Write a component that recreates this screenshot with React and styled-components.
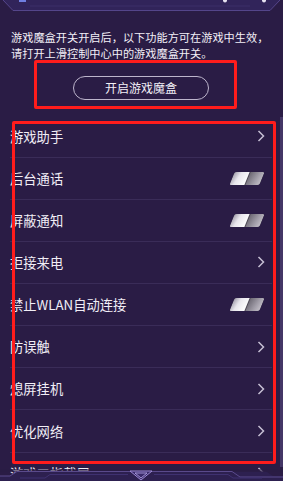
import React from "react";
import styled, { createGlobalStyle } from "styled-components";

const GlobalStyle = createGlobalStyle`
  html, body {
    margin: 0;
    padding: 0;
    background: #2a1c45;
  }
  * {
    box-sizing: border-box;
  }
`;

const rows = [
  { label: "游戏助手", type: "link" },
  { label: "后台通话", type: "toggle" },
  { label: "屏蔽通知", type: "toggle" },
  { label: "拒接来电", type: "link" },
  { label: "禁止WLAN自动连接", type: "toggle" },
  { label: "防误触", type: "link" },
  { label: "熄屏挂机", type: "link" },
  { label: "优化网络", type: "link" },
  { label: "游戏三指截屏", type: "link" },
];

const App = () => {
  return (
    <Screen>
      <GlobalStyle />
      <TopFrame>
        <svg width="283" height="12" viewBox="0 0 283 12">
          <path d="M3 0 L13 10.5 L270 10.5 L280 0 Z" fill="#31245a" />
          <path d="M3 0 L13 10.5 L270 10.5 L280 0" fill="none" stroke="#54458a" strokeWidth="1" />
          <path d="M30 6 L250 6" stroke="#3c2e68" strokeWidth="1" />
          <rect x="19" y="0" width="7" height="2" fill="#6f7fe0" />
          <circle cx="225" cy="0.5" r="2" fill="#e6e2f0" />
          <circle cx="264" cy="0.5" r="2" fill="#e6e2f0" />
        </svg>
      </TopFrame>

      <Intro>
        游戏魔盒开关开启后，以下功能方可在游戏中生效，
        <br />
        请打开上滑控制中心中的游戏魔盒开关。
      </Intro>

      <ButtonArea>
        <PillButton>开启游戏魔盒</PillButton>
        <Highlight $top={-1} $left={34} $width={203} $height={49} />
      </ButtonArea>

      <List>
        {rows.map((row) => (
          <Row key={row.label}>
            <RowLabel>{row.label}</RowLabel>
            {row.type === "toggle" ? <Toggle /> : <Chevron />}
          </Row>
        ))}
        <Highlight $top={5.5} $left={2} $width={264} $height={343} />
        <ScrollThumb />
      </List>

      <BottomFrame>
        <svg width="283" height="12" viewBox="0 0 283 12">
          <path d="M0 12 L0 7 L10 7 L17 2.5 L266 2.5 L273 7 L283 7 L283 12 Z" fill="#2d2050" />
          <rect x="0" y="0" width="283" height="3" fill="#2a1c45" opacity="0.6" />
          <path d="M0 7 L10 7 L17 2.5 L131 2.5" fill="none" stroke="#5a4a8c" strokeWidth="1" />
          <path d="M151 2.5 L232 2.5 L240 8 L283 8" fill="none" stroke="#5a4a8c" strokeWidth="1" />
          <path d="M20 9 L45 9 L50 5.5 L128 5.5" fill="none" stroke="#3f3170" strokeWidth="1" />
          <path d="M154 5.5 L228 5.5 L233 9 L262 9" fill="none" stroke="#3f3170" strokeWidth="1" />
          <path d="M130 2 L152 2 L141 11 Z" fill="#3a2b6a" stroke="#9c8ad4" strokeWidth="1" />
          <path d="M135 4 L147 4 L141 9 Z" fill="none" stroke="#b9a9ec" strokeWidth="0.8" />
        </svg>
      </BottomFrame>
    </Screen>
  );
};

export default App;

const Toggle = () => (
  <ToggleTrack>
    <ToggleOn />
    <ToggleOff />
  </ToggleTrack>
);

const Chevron = () => (
  <ChevronIcon width="8" height="12" viewBox="0 0 8 12">
    <polyline points="1.5,1 6.5,6 1.5,11" fill="none" stroke="#c6bfd4" strokeWidth="1.5" />
  </ChevronIcon>
);

const Screen = styled.div`
  position: relative;
  width: 283px;
  height: 481px;
  overflow: hidden;
  background: #2a1c45;
  font-family: "Noto Sans CJK SC", "Noto Sans", sans-serif;
  color: #f1eef6;
`;

const TopFrame = styled.div`
  height: 12px;
  svg {
    display: block;
  }
`;

const Intro = styled.p`
  margin: 17px 0 0;
  padding: 0 0 0 11px;
  font-size: 11.2px;
  line-height: 16px;
  white-space: nowrap;
  color: #f3f0f7;
`;

const ButtonArea = styled.div`
  position: relative;
  display: flex;
  justify-content: center;
  padding: 15px 0 15.5px;
`;

const PillButton = styled.button`
  width: 136px;
  height: 24px;
  margin-left: -1px;
  border: 1px solid #bdb5cc;
  border-radius: 12px;
  background: transparent;
  color: #f3f0f7;
  font-family: inherit;
  font-size: 12px;
  line-height: 22px;
  padding: 0;
`;

const Highlight = styled.div`
  position: absolute;
  top: ${(p) => p.$top}px;
  left: ${(p) => p.$left}px;
  width: ${(p) => p.$width}px;
  height: ${(p) => p.$height}px;
  border: 3px solid #ff1c1c;
  border-radius: 2px;
  pointer-events: none;
  z-index: 2;
`;

const List = styled.div`
  position: relative;
  margin-left: 10px;
  width: 262px;
`;

const Row = styled.div`
  display: flex;
  align-items: center;
  justify-content: space-between;
  height: 42.15px;
  padding-right: 7px;
  border-bottom: 1px solid #3a2c58;
`;

const RowLabel = styled.span`
  font-size: 13.3px;
  color: #f1eef6;
  white-space: nowrap;
`;

const ChevronIcon = styled.svg`
  display: block;
  flex: none;
`;

const ToggleTrack = styled.div`
  display: flex;
  gap: 1px;
  width: 30px;
  height: 13px;
  margin-right: 3px;
  transform: skewX(-22deg);
  border-radius: 2px;
  overflow: hidden;
  background: #4a4552;
`;

const ToggleOn = styled.div`
  flex: 1;
  background: linear-gradient(105deg, #a19dab 0%, #e8e6ec 40%, #ffffff 100%);
`;

const ToggleOff = styled.div`
  flex: 1;
  background: linear-gradient(105deg, #6c6873 0%, #a29ea9 60%, #c3bfc8 100%);
`;

const ScrollThumb = styled.div`
  position: absolute;
  top: 1px;
  right: -11px;
  width: 3px;
  height: 350px;
  background: #443666;
`;

const BottomFrame = styled.div`
  position: absolute;
  left: 0;
  bottom: 0;
  width: 283px;
  height: 12px;
  z-index: 3;
  svg {
    display: block;
  }
`;
